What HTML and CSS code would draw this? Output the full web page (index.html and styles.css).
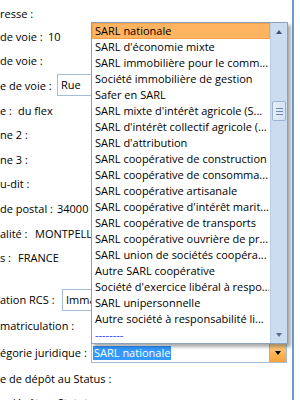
FILE: index.html
```html
<!DOCTYPE html>
<html lang="fr">
<head>
<meta charset="utf-8">
<title>Adresse</title>
<link rel="stylesheet" href="styles.css">
</head>
<body>
<div class="page">
  <div class="form">
    <div class="row first"><span class="lbl">resse :</span></div>
    <div class="row"><span class="lbl w48">de voie :</span><span class="val">10</span></div>
    <div class="row"><span class="lbl">de voie :</span></div>
    <div class="row"><span class="lbl w57">e de voie :</span><span class="box rue">Rue</span></div>
    <div class="row"><span class="lbl w18">e :</span><span class="val">du flex</span></div>
    <div class="row"><span class="lbl">ne 2 :</span></div>
    <div class="row"><span class="lbl">ne 3 :</span></div>
    <div class="row"><span class="lbl">u-dit :</span></div>
    <div class="row"><span class="lbl w57">de postal :</span><span class="val">34000</span></div>
    <div class="row"><span class="lbl w35">alité :</span><span class="val clip-city">MONTPELLIER</span></div>
    <div class="row"><span class="lbl w18">s :</span><span class="val">FRANCE</span></div>
    <div class="row tall gap"><span class="lbl w62">ation RCS :</span><span class="box rcs">Immatriculée</span></div>
    <div class="row tall"><span class="lbl">matriculation :</span></div>
    <div class="row cat">
      <span class="lbl w91">égorie juridique :</span>
      <div class="combo">
        <span class="combo-text"><span class="sel">SARL nationale</span></span>
        <span class="combo-btn"><span class="tri-down dark"></span></span>
      </div>
    </div>
    <div class="row date"><span class="lbl">e de dépôt au Status :</span></div>
    <div class="row"><span class="lbl">e dépôt au Statut :</span></div>
  </div>
  <div class="divider"></div>

  <div class="dropdown">
    <ul class="items">
      <li class="item active">SARL nationale</li>
      <li class="item">SARL d'économie mixte</li>
      <li class="item">SARL immobilière pour le comm...</li>
      <li class="item">Société immobilière de gestion</li>
      <li class="item">Safer en SARL</li>
      <li class="item">SARL mixte d'intérêt agricole (S...</li>
      <li class="item">SARL d'intérêt collectif agricole (...</li>
      <li class="item">SARL d'attribution</li>
      <li class="item">SARL coopérative de construction</li>
      <li class="item">SARL coopérative de consomma...</li>
      <li class="item">SARL coopérative artisanale</li>
      <li class="item">SARL coopérative d'intérêt marit...</li>
      <li class="item">SARL coopérative de transports</li>
      <li class="item">SARL coopérative ouvrière de pr...</li>
      <li class="item">SARL union de sociétés coopéra...</li>
      <li class="item">Autre SARL coopérative</li>
      <li class="item">Société d'exercice libéral à respo...</li>
      <li class="item">SARL unipersonnelle</li>
      <li class="item">Autre société à responsabilité li...</li>
      <li class="item sep">--------</li>
    </ul>
    <div class="scrollbar">
      <span class="sb-btn"><span class="tri-up"></span></span>
      <span class="sb-track">
        <span class="sb-thumb"><span class="grip"></span><span class="grip"></span><span class="grip"></span></span>
      </span>
      <span class="sb-btn"><span class="tri-down"></span></span>
    </div>
  </div>
</div>
</body>
</html>
```

FILE: styles.css
```css
* { box-sizing: border-box; }

html, body {
  margin: 0;
  padding: 0;
  background: #ffffff;
}

body {
  width: 300px;
  height: 400px;
  overflow: hidden;
  font-family: "Open Sans", "Noto Sans", sans-serif;
  font-size: 11px;
  color: #000000;
}

.page {
  position: relative;
  width: 300px;
  height: 400px;
  display: flex;
}

.form {
  width: 292px;
  height: 400px;
  padding-top: 2px;
  overflow: hidden;
  flex: none;
}

.divider {
  width: 2px;
  height: 400px;
  background: #6f9ad6;
  flex: none;
}

.row {
  display: flex;
  align-items: center;
  height: 24.6px;
  white-space: nowrap;
}

.row.first { height: 22px; }
.row.tall { height: 26px; }
.row.gap { margin-top: 17px; }
.row.cat { height: 28px; }
.row.date { height: 23px; }

.lbl { flex: none; }
.w18 { width: 18px; }
.w35 { width: 35px; }
.w48 { width: 48px; }
.w57 { width: 57px; }
.w62 { width: 62px; }
.w91 { width: 91px; }

.val { flex: none; }

/* value that runs under the open list: clipped at the list edge */
.clip-city {
  width: 57px;
  overflow: hidden;
}

.box {
  flex: none;
  height: 22px;
  line-height: 20px;
  border: 1px solid #a7bcd6;
  padding-left: 3px;
  background: #ffffff;
  overflow: hidden;
}

.rue { width: 36px; }
.rcs { width: 31px; }

.combo {
  flex: none;
  width: 196px;
  height: 20px;
  border: 1px solid #a4bcd8;
  display: flex;
  background: #ffffff;
}

.combo-text {
  flex: 1;
  display: flex;
  align-items: center;
  padding-left: 1px;
}

.sel {
  background: #3399ff;
  color: #ffffff;
  line-height: 14px;
  padding: 0 1px;
}

.combo-btn {
  flex: none;
  width: 17px;
  height: 18px;
  background: linear-gradient(#ffd391, #fbb556 55%, #f8a238);
  border-left: 1px solid #f0a24c;
  display: flex;
  align-items: center;
  justify-content: center;
}

.tri-down {
  width: 0;
  height: 0;
  border-left: 3.5px solid transparent;
  border-right: 3.5px solid transparent;
  border-top: 4px solid #5d6f8e;
}

.tri-down.dark { border-top-color: #000000; }

.tri-up {
  width: 0;
  height: 0;
  border-left: 3.5px solid transparent;
  border-right: 3.5px solid transparent;
  border-bottom: 4px solid #3f5273;
}

/* Open dropdown list, overlaying the form */
.dropdown {
  position: absolute;
  left: 91px;
  top: 22px;
  width: 197px;
  height: 322px;
  border: 1px solid #8aa0bf;
  background: #ffffff;
  box-shadow: 3px 3px 3px rgba(0, 0, 0, 0.32);
  display: flex;
}

.items {
  list-style: none;
  margin: 0;
  padding: 0;
  flex: 1;
  min-width: 0;
}

.item {
  height: 16px;
  line-height: 14px;
  border: 1px solid transparent;
  padding-left: 2px;
  white-space: nowrap;
  overflow: hidden;
}

.item.active {
  background: #ffb462;
  border-color: #f5a04a;
}

.item.sep { color: #1a3bff; }

.scrollbar {
  flex: none;
  width: 17px;
  display: flex;
  flex-direction: column;
  background: #cbdcf1;
  border-left: 1px solid #b9cde8;
}

.sb-btn {
  flex: none;
  height: 17px;
  display: flex;
  align-items: center;
  justify-content: center;
}

.sb-track {
  flex: 1;
  padding-top: 61px;
  display: flex;
  flex-direction: column;
  align-items: center;
}

.sb-thumb {
  width: 14px;
  height: 20px;
  border: 1px solid #9bb3d3;
  border-radius: 2px;
  background: linear-gradient(90deg, #e6eefa, #d6e3f5);
  display: flex;
  flex-direction: column;
  align-items: center;
  justify-content: center;
  gap: 2px;
}

.grip {
  width: 7px;
  height: 1px;
  background: #7088ad;
}
```
